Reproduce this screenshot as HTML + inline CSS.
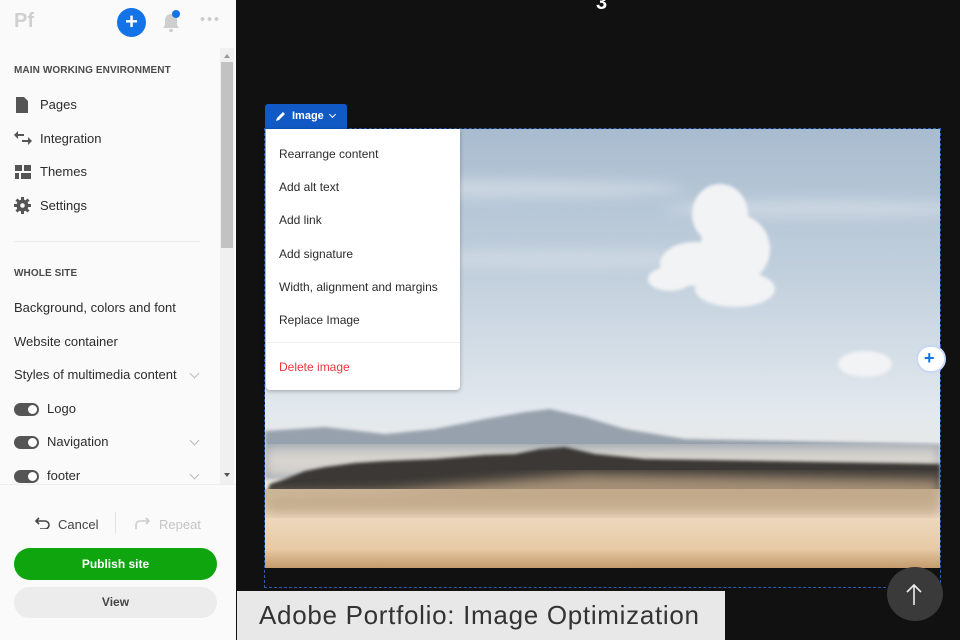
<!DOCTYPE html>
<html><head><meta charset="utf-8"><style>
*{margin:0;padding:0;box-sizing:border-box}
body{width:960px;height:640px;overflow:hidden;background:#111;font-family:"Liberation Sans",sans-serif;position:relative}
.side{position:absolute;left:0;top:0;width:236px;height:640px;background:#fafafa}
.abs{position:absolute}
.item{position:absolute;left:14px;font-size:13px;color:#2c2c2c}
.hd{position:absolute;left:14px;font-size:10px;font-weight:bold;color:#4b4b4b;letter-spacing:.1px}
.tog{position:absolute;left:14px;width:25px;height:13px;border-radius:7px;background:#555}
.tog:after{content:"";position:absolute;right:2px;top:2px;width:9px;height:9px;border-radius:50%;background:#fff}
.chev{position:absolute;left:191px;width:7px;height:7px;border-right:1.3px solid #bbb;border-bottom:1.3px solid #bbb;transform:rotate(45deg)}
.menu div{position:absolute;left:13px;font-size:12px;color:#2c2c2c}
</style></head><body>
<div class="side">
  <div class="abs" style="left:14px;top:10px;font-size:20px;font-weight:bold;color:#d0d0d0">Pf</div>
  <div class="abs" style="left:117px;top:8px;width:29px;height:29px;border-radius:50%;background:#1473e6;color:#fff;font-size:22px;line-height:28px;text-align:center;font-weight:bold">+</div>
  <svg class="abs" style="left:159px;top:9px" width="24" height="26" viewBox="0 0 24 26"><path d="M4 19 L6 16 V11 A6 6 0 0 1 18 11 V16 L20 19 Z" fill="#cfcfcf"/><rect x="10" y="20" width="4" height="3" rx="1.5" fill="#cfcfcf"/><circle cx="17" cy="5" r="4" fill="#1473e6"/></svg>
  <div class="abs" style="left:199px;top:17px;width:20px;height:4px;background:radial-gradient(circle,#ccc 1.8px,transparent 2px) 0 0/7px 4px"></div>
  <div class="abs" style="left:220px;top:48px;width:14px;height:436px;background:#f0f0f0"></div>
  <div class="abs" style="left:221px;top:62px;width:12px;height:186px;background:#c2c2c2"></div>
  <div class="abs" style="left:224px;top:54px;border:3px solid transparent;border-bottom:4px solid #999;border-top:0"></div>
  <div class="abs" style="left:224px;top:473px;border:3px solid transparent;border-top:4px solid #555;border-bottom:0"></div>
  <div class="hd" style="top:65px">MAIN WORKING ENVIRONMENT</div>
  <svg class="abs" style="left:16px;top:97px" width="14" height="16"><path d="M0 0H8L12 4V16H0Z" fill="#555"/></svg>
  <div class="item" style="left:40px;top:97px">Pages</div>
  <svg class="abs" style="left:14px;top:131px" width="18" height="14"><path d="M0 4L4 0V3H10V5H4V8Z M18 10L14 6V9H8V11H14V14Z" fill="#555"/></svg>
  <div class="item" style="left:40px;top:131px">Integration</div>
  <svg class="abs" style="left:15px;top:165px" width="16" height="14"><rect x="0" y="0" width="7" height="6" fill="#555"/><rect x="9" y="0" width="7" height="6" fill="#555"/><rect x="0" y="8" width="4" height="6" fill="#555"/><rect x="6" y="8" width="10" height="6" fill="#555"/></svg>
  <div class="item" style="left:40px;top:164px">Themes</div>
  <svg class="abs" style="left:14px;top:197px" width="17" height="17" viewBox="0 0 17 17"><circle cx="8.5" cy="8.5" r="6" fill="#555"/><g stroke="#555" stroke-width="3"><path d="M8.5 0V17M0 8.5H17M2.5 2.5L14.5 14.5M14.5 2.5L2.5 14.5"/></g><circle cx="8.5" cy="8.5" r="2.3" fill="#fafafa"/></svg>
  <div class="item" style="left:40px;top:198px">Settings</div>
  <div class="abs" style="left:14px;top:241px;width:186px;height:1px;background:#ececec"></div>
  <div class="hd" style="top:268px">WHOLE SITE</div>
  <div class="item" style="top:300px">Background, colors and font</div>
  <div class="item" style="top:334px">Website container</div>
  <div class="item" style="top:367px">Styles of multimedia content</div><div class="chev" style="top:370px"></div>
  <div class="tog" style="top:403px"></div><div class="item" style="left:47px;top:401px">Logo</div>
  <div class="tog" style="top:436px"></div><div class="item" style="left:47px;top:434px">Navigation</div><div class="chev" style="top:437px"></div>
  <div class="tog" style="top:470px"></div><div class="item" style="left:47px;top:468px">footer</div><div class="chev" style="top:471px"></div>
  <div class="abs" style="left:0;top:484px;width:236px;height:156px;background:#fafafa;border-top:1px solid #eee"></div>
  <svg class="abs" style="left:34px;top:517px" width="16" height="12"><path d="M2 4H11A4 4 0 0 1 11 12H6M5 1L2 4L5 7" fill="none" stroke="#444" stroke-width="1.6"/></svg>
  <div class="item" style="left:58px;top:517px;color:#444">Cancel</div>
  <div class="abs" style="left:115px;top:512px;width:1px;height:22px;background:#e5e5e5"></div>
  <svg class="abs" style="left:134px;top:517px" width="18" height="12"><path d="M15 4H6A4 4 0 0 0 2 8V12M12 1L15 4L12 7" fill="none" stroke="#ccc" stroke-width="1.6"/></svg>
  <div class="item" style="left:159px;top:517px;color:#c4c4c4">Repeat</div>
  <div class="abs" style="left:14px;top:548px;width:203px;height:32px;border-radius:16px;background:#0ea50e;color:#fff;font-size:12px;font-weight:bold;text-align:center;line-height:32px">Publish site</div>
  <div class="abs" style="left:14px;top:587px;width:203px;height:31px;border-radius:16px;background:#ececec;color:#444;font-size:12px;font-weight:bold;text-align:center;line-height:31px">View</div>
</div>
<div class="abs" style="left:596px;top:-8px;color:#fff;font-weight:bold;font-size:20px">3</div>
<div class="abs" style="left:264px;top:128px;width:677px;height:460px;border:1px dashed #2a5db0"></div>
<svg class="abs" style="left:265px;top:129px" width="675" height="439" viewBox="0 0 675 439">
<defs>
<linearGradient id="sky" x1="0" y1="0" x2="0" y2="1"><stop offset="0" stop-color="#a9bccf"/><stop offset=".35" stop-color="#c3d1de"/><stop offset=".65" stop-color="#e3e9ee"/><stop offset=".8" stop-color="#ece9e2"/></linearGradient>
<linearGradient id="sand" x1="0" y1="0" x2="0" y2="1"><stop offset="0" stop-color="#cdb89c"/><stop offset=".35" stop-color="#ecd8bf"/><stop offset=".75" stop-color="#e8cba6"/><stop offset="1" stop-color="#c49b6d"/></linearGradient>
<filter id="b"><feGaussianBlur stdDeviation="6"/></filter>
<filter id="b2"><feGaussianBlur stdDeviation="1.5"/></filter>
</defs>
<rect width="675" height="439" fill="url(#sky)"/>
<g filter="url(#b)" fill="#d4dde6" opacity=".7"><ellipse cx="200" cy="60" rx="220" ry="10"/><ellipse cx="560" cy="80" rx="160" ry="9"/><ellipse cx="300" cy="130" rx="200" ry="8"/></g>
<g filter="url(#b2)" fill="#f2f3f4">
<ellipse cx="455" cy="85" rx="28" ry="30"/><ellipse cx="470" cy="120" rx="35" ry="35"/><ellipse cx="430" cy="135" rx="35" ry="22"/><ellipse cx="405" cy="150" rx="22" ry="12"/><ellipse cx="470" cy="160" rx="40" ry="18"/>
<ellipse cx="600" cy="235" rx="27" ry="13"/>
</g>
<path d="M0 302 L60 298 L120 305 L170 300 L220 290 L260 283 L285 280 L320 288 L360 300 L420 310 L675 315 V350 H0Z" fill="#8a95a3" opacity=".85" filter="url(#b2)"/>
<rect x="0" y="318" width="675" height="30" fill="#e6e1d8" opacity=".8" filter="url(#b)"/>
<path d="M0 370 L5 355 L20 350 L40 342 L60 338 L90 334 L120 332 L170 330 L220 326 L250 325 L275 320 L300 318 L330 325 L380 330 L500 332 L675 335 V385 H0Z" fill="#3b3936" filter="url(#b2)"/>
<rect x="0" y="360" width="675" height="79" fill="url(#sand)"/>
<path d="M0 365 L120 362 L200 355 L320 345 L675 350 V385 L0 385Z" fill="#bfa586" opacity=".8" filter="url(#b)"/>
</svg>
<div class="abs" style="left:265px;top:104px;width:82px;height:25px;background:#1159c4;border-radius:3px 3px 0 0;color:#fff;font-size:11px;font-weight:bold;line-height:25px;padding-left:27px">Image</div>
<svg class="abs" style="left:275px;top:111px" width="11" height="11"><path d="M1 10L2 7L8 1L10 3L4 9Z" fill="#fff"/></svg>
<div class="abs" style="left:330px;top:112px;width:5px;height:5px;border-right:1.2px solid #fff;border-bottom:1.2px solid #fff;transform:rotate(45deg)"></div>
<div class="abs menu" style="left:266px;top:129px;width:194px;height:261px;background:#fff;border-radius:0 0 4px 4px;box-shadow:0 1px 4px rgba(0,0,0,.3)">
  <div style="top:18px">Rearrange content</div>
  <div style="top:51px">Add alt text</div>
  <div style="top:84px">Add link</div>
  <div style="top:118px">Add signature</div>
  <div style="top:151px">Width, alignment and margins</div>
  <div style="top:184px">Replace Image</div>
  <div style="top:213px;left:0;width:194px;height:1px;background:#f0f0f0"></div>
  <div style="top:231px;color:#e8383d">Delete image</div>
</div>
<div class="abs" style="left:916px;top:345px;width:30px;height:28px;border-radius:14px;background:#fff;border:2px solid #c7d8f0;color:#1473e6;font-size:18px;font-weight:bold;line-height:23px;padding-left:6px">+</div>
<div class="abs" style="left:887px;top:567px;width:56px;height:54px;border-radius:50%;background:#3a3a3a"></div>
<svg class="abs" style="left:904px;top:582px" width="20" height="24"><path d="M10 23V3M3 10L10 3L17 10" fill="none" stroke="#eee" stroke-width="1.6"/></svg>
<div class="abs" style="left:237px;top:591px;width:488px;height:49px;background:#e8e8e8;color:#333;font-size:26px;line-height:48px;padding-left:22px;letter-spacing:.7px;white-space:nowrap">Adobe Portfolio: Image Optimization</div>
</body></html>
